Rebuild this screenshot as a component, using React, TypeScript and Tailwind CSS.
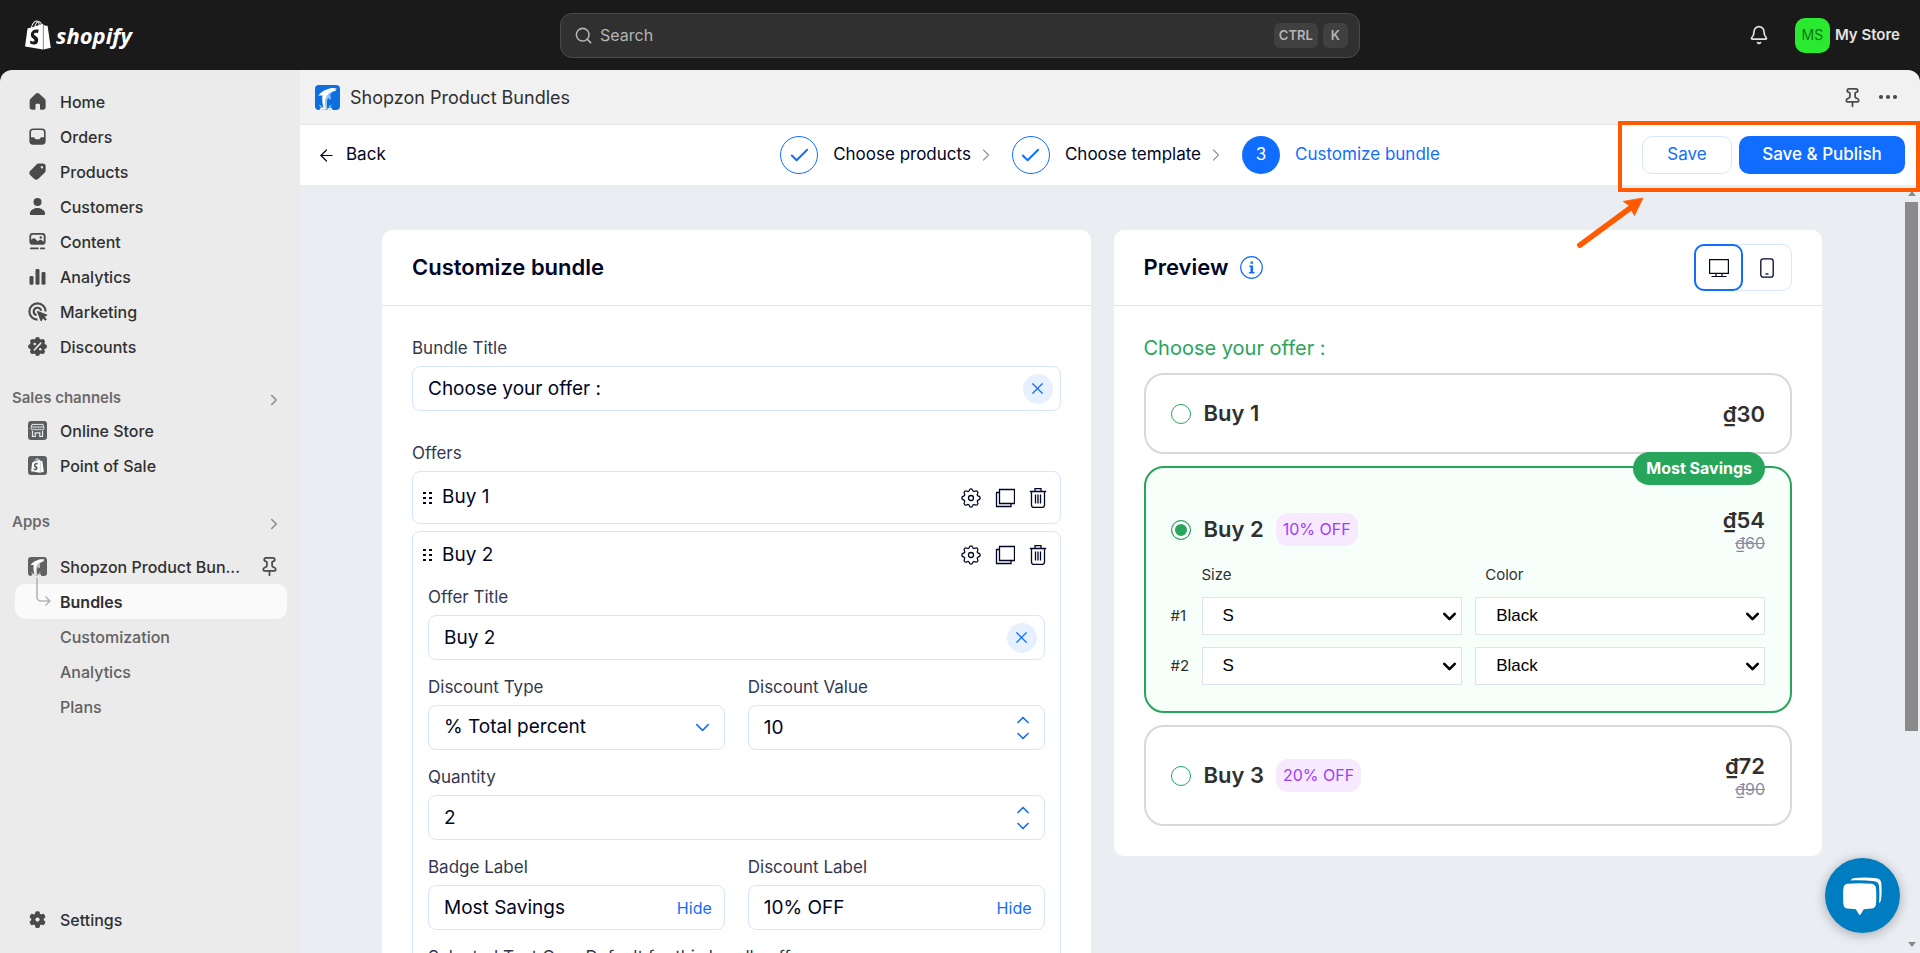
import { useState } from "react";
import type { ReactNode } from "react";
import { ArrowLeft, Bell, Check, ChevronDown, ChevronRight, ChevronUp, Pin, Search, X } from "lucide-react";
import { FaShopify } from "react-icons/fa";

interface NavItem {
  label: string;
  icon: ReactNode;
}

interface Offer {
  id: string;
  title: string;
  price: string;
  oldPrice?: string;
  discount?: string;
  badge?: string;
  variants?: number;
}

const spokes8 = [0, 45, 90, 135, 180, 225, 270, 315];
const spokes6 = [0, 60, 120, 180, 240, 300];

const mainNav: NavItem[] = [
  {
    label: "Home",
    icon: (
      <path d="M8.4 3.9a2.4 2.4 0 0 1 3.2 0l4.2 3.8c.45.4.7 1 .7 1.6v5a2.2 2.2 0 0 1-2.2 2.2h-1.55a.75.75 0 0 1-.75-.75v-3a1 1 0 0 0-1-1h-1.6a1 1 0 0 0-1 1v3a.75.75 0 0 1-.75.75h-1.75a2.2 2.2 0 0 1-2.2-2.2v-5c0-.6.25-1.2.7-1.6z" />
    ),
  },
  {
    label: "Orders",
    icon: (
      <path
        fillRule="evenodd"
        d="M6.5 3.5h7a3 3 0 0 1 3 3v7a3 3 0 0 1-3 3h-7a3 3 0 0 1-3-3v-7a3 3 0 0 1 3-3zM6.6 4.8A1.8 1.8 0 0 0 4.8 6.6v3.9h1.9c.5 0 .9.3 1.1.8a1.2 1.2 0 0 0 1.1.8h2.2a1.2 1.2 0 0 0 1.1-.8c.2-.5.6-.8 1.1-.8h1.9V6.6a1.8 1.8 0 0 0-1.8-1.8z"
      />
    ),
  },
  {
    label: "Products",
    icon: (
      <path
        fillRule="evenodd"
        d="M10.9 3.5h3.4a2.2 2.2 0 0 1 2.2 2.2v3.4c0 .7-.3 1.3-.8 1.8l-5 4.9a2.5 2.5 0 0 1-3.5 0l-2.9-2.9a2.5 2.5 0 0 1 0-3.5l4.9-5c.5-.6 1-.9 1.700-.9zM13.500 5.600a.95.95 0 1 0 0 1.900.95.95 0 0 0 0-1.900z"
      />
    ),
  },
  {
    label: "Customers",
    icon: (
      <>
        <circle cx="10" cy="6.4" r="3.2" />
        <path d="M3.9 15.7c0-2.5 2.9-4.5 6.1-4.5s6.1 2 6.1 4.5c0 .7-.5 1.1-1.2 1.1H5.1c-.7 0-1.2-.4-1.2-1.1z" />
      </>
    ),
  },
  {
    label: "Content",
    icon: (
      <>
        <path
          fillRule="evenodd"
          d="M6.2 3.2h7.6a2.7 2.7 0 0 1 2.7 2.7v4a2.7 2.7 0 0 1-2.7 2.7H6.2a2.7 2.7 0 0 1-2.7-2.7v-4a2.7 2.7 0 0 1 2.7-2.7zM6.3 4.6A1.4 1.4 0 0 0 4.9 6v2.6l1.5-1c.5-.4 1-.4 1.5 0l2.3 2.2 1.4-1c.5-.4 1-.3 1.5 0l1.9 1.4V6a1.4 1.4 0 0 0-1.4-1.4zM12.6 5.7a1 1 0 1 1 0 2 1 1 0 0 1 0-2z"
        />
        <rect x="4" y="14.8" width="7" height="1.4" rx=".7" />
        <rect x="12" y="14.8" width="4" height="1.4" rx=".7" />
      </>
    ),
  },
  {
    label: "Analytics",
    icon: (
      <>
        <rect x="3.6" y="9.6" width="3.2" height="7" rx="1.1" />
        <rect x="8.4" y="4" width="3.2" height="12.6" rx="1.1" />
        <rect x="13.2" y="6.4" width="3.2" height="10.2" rx="1.1" />
      </>
    ),
  },
  {
    label: "Marketing",
    icon: (
      <>
        <path d="M10 16.5A6.5 6.5 0 1 1 16.5 10" fill="none" stroke="currentColor" strokeWidth="1.7" />
        <path d="M9.2 12.9A3 3 0 1 1 12.9 9.4" fill="none" stroke="currentColor" strokeWidth="1.7" />
        <path d="M10.3 9.6l7.2 2.7c.5.2.5.9 0 1.1l-1.8.8 1.8 1.9-1.3 1.3-1.9-1.8-.8 1.8c-.2.5-.9.5-1.1 0L9.6 10.3c-.2-.5.2-.9.7-.7z" />
      </>
    ),
  },
  {
    label: "Discounts",
    icon: (
      <>
        <circle cx="10" cy="10" r="6.2" />
        {spokes8.map((a) => (
          <circle key={a} cx="10" cy="4.3" r="1.9" transform={`rotate(${a} 10 10)`} />
        ))}
        <path d="M7.6 12.6l4.9-5.2" stroke="#ebebeb" strokeWidth="1.4" strokeLinecap="round" />
        <circle cx="7.8" cy="7.9" r="1" fill="#ebebeb" />
        <circle cx="12.2" cy="12.1" r="1" fill="#ebebeb" />
      </>
    ),
  },
];

const offers: Offer[] = [
  { id: "1", title: "Buy 1", price: "₫30" },
  { id: "2", title: "Buy 2", price: "₫54", oldPrice: "₫60", discount: "10% OFF", badge: "Most Savings", variants: 2 },
  { id: "3", title: "Buy 3", price: "₫72", oldPrice: "₫90", discount: "20% OFF" },
];

function NavIcon({ children }: { children: ReactNode }) {
  return (
    <svg viewBox="0 0 20 20" className="size-[25px] shrink-0 fill-current text-[#4a4a4a]" aria-hidden="true">
      {children}
    </svg>
  );
}

function DolphinIcon({ muted = false, className }: { muted?: boolean; className: string }) {
  return (
    <svg viewBox="0 0 25 25" className={className} aria-hidden="true">
      <rect width="25" height="25" rx="4" fill={muted ? "#616161" : "#0b6fe0"} />
      <path
        d="M22 3.6C19 2.600 14.500 2.800 11.800 4.600 8.800 5.400 6.200 7 3.200 10.800c1.500-.3 3-.4 4.300-.3C6.800 14.500 7.300 19.500 9.300 24.500h3.200C11.300 20 11.400 16 12.800 12.500l2.600 2c0-2.200-.1-3.600-.5-5C16.500 7.300 18.500 6 21.500 5.600c-.4-.5-.9-.7-1.500-.8z"
        fill="#fff"
      />
      <path
        d="M20 5.700c-5.400.8-9.600 4.400-10 11.300-.1 2.600.2 5 .9 7.500h1.600C11.300 20 11.400 16 12.800 12.500l2.600 2c0-2.200-.1-3.600-.5-5 1.400-1.900 3-3 5.100-3.800z"
        fill={muted ? "#c4c4c4" : "#8ec3f2"}
      />
      <path
        d="M5 24.600c0-1.300 1-1.800 1.900-1.300.3-1 1.500-1 1.800 0l.4 1.300zM13 24.600c.1-1.300 1-1.700 1.800-1.200.6-.9 2.200-.6 2.200 1.200zM4.800 20.600l1.600 1M16 20.400l-1.800 1.600"
        fill="#fff"
        stroke="#fff"
        strokeWidth=".9"
        strokeLinecap="round"
      />
    </svg>
  );
}

function SectionTitle({ children }: { children: ReactNode }) {
  return (
    <button type="button" className="flex h-[30px] w-full items-center justify-between pr-1 pl-3 text-[15px] font-semibold text-[#6b6b6b]">
      {children}
      <ChevronRight size={18} strokeWidth={2} className="mt-1 text-[#8a8a8a]" />
    </button>
  );
}

function Sidebar() {
  return (
    <nav className="flex w-[300px] shrink-0 flex-col rounded-tl-xl bg-[#ebebeb] pt-[14px] pr-[13px] pb-4 text-base font-medium text-[#303030]">
      <ul>
        {mainNav.map((item) => (
          <li key={item.label}>
            <a href="#" className="flex h-[35px] items-center gap-[10px] pl-[25px]">
              <NavIcon>{item.icon}</NavIcon>
              {item.label}
            </a>
          </li>
        ))}
      </ul>

      <div className="mt-[19px]">
        <SectionTitle>Sales channels</SectionTitle>
        <a href="#" className="flex h-[35px] items-center gap-[13px] pl-7">
          <svg viewBox="0 0 19 19" className="size-[19px] shrink-0" aria-hidden="true">
            <rect width="19" height="19" rx="3" fill="#5c5f62" />
            <path d="M4 3.4h11l1 4.1c0 1.5-2.2 1.7-2.6.3-.4 1.5-2.3 1.5-2.6 0-.4 1.5-2.300 1.5-2.700 0-.4 1.5-2.200 1.5-2.600 0C5 9.300 3 9 3 7.500z" fill="none" stroke="#ebebeb" strokeWidth="1" />
            <path d="M4 6h11M4.500 9.800v5.700h2.700v-3.600h4.600v3.600h2.700V9.800" fill="none" stroke="#ebebeb" strokeWidth="1.2" />
          </svg>
          Online Store
        </a>
        <a href="#" className="flex h-[35px] items-center gap-[13px] pl-7">
          <span className="flex size-[19px] shrink-0 items-center justify-center rounded-[3px] bg-[#5c5f62] text-white">
            <FaShopify size={15} />
          </span>
          Point of Sale
        </a>
      </div>

      <div className="mt-6">
        <SectionTitle>Apps</SectionTitle>
        <div className="relative mt-3 flex h-[35px] items-center">
          <a href="#" className="flex flex-1 items-center gap-[13px] pl-7 whitespace-nowrap">
            <DolphinIcon muted className="size-[19px] shrink-0" />
            Shopzon Product Bun...
          </a>
          <button type="button" aria-label="Unpin" className="mr-[7px] text-[#4a4a4a]">
            <Pin size={21} />
          </button>
          <svg viewBox="0 0 16 30" className="absolute top-7 left-9 z-10 h-[30px] w-4" fill="none" stroke="#b5b5b5" strokeWidth="1.6" strokeLinecap="round" strokeLinejoin="round" aria-hidden="true">
            <path d="M1 1v19a4 4 0 0 0 4 4h8M10 20l4 4-4 4" />
          </svg>
        </div>
        <div className="flex flex-col pl-[15px] text-[#616161]">
          <a href="#" aria-current="page" className="flex h-[35px] items-center rounded-[10px] bg-[#fafafa] pl-[45px] font-semibold text-[#303030]">
            Bundles
          </a>
          {["Customization", "Analytics", "Plans"].map((label) => (
            <a key={label} href="#" className="flex h-[35px] items-center pl-[45px]">
              {label}
            </a>
          ))}
        </div>
      </div>

      <a href="#" className="mt-auto flex h-[35px] items-center gap-[10px] pl-[25px]">
        <NavIcon>
          <circle cx="10" cy="10" r="5" />
          {spokes6.map((a) => (
            <rect key={a} x="8.1" y="3.3" width="3.8" height="4" rx="1.3" transform={`rotate(${a} 10 10)`} />
          ))}
          <circle cx="10" cy="10" r="1.7" fill="#ebebeb" />
        </NavIcon>
        Settings
      </a>
    </nav>
  );
}

function TopBar() {
  return (
    <header className="grid h-[70px] shrink-0 grid-cols-[1fr_800px_1fr] items-center">
      <a href="#" aria-label="Shopify" className="flex items-center gap-[3px] pl-[23px] text-white">
        <FaShopify size={30} />
        <span className="font-['Open_Sans',sans-serif] text-[22px] leading-7 font-bold italic">shopify</span>
      </a>
      <label className="flex h-[45px] items-center gap-[7px] rounded-xl border border-[#4a4a4a] bg-[#303030] pr-[11px] pl-[13px] text-[#b5b5b5]">
        <Search size={19} />
        <input type="search" placeholder="Search" aria-label="Search" className="min-w-0 flex-1 bg-transparent text-base outline-none placeholder:text-[#b5b5b5]" />
        <kbd className="rounded-md bg-[#404040] px-[5px] font-['Inter',sans-serif] text-[13px] leading-[25px] font-semibold">CTRL</kbd>
        <kbd className="-ml-[2px] rounded-md bg-[#404040] px-2 font-['Inter',sans-serif] text-[13px] leading-[25px] font-semibold">K</kbd>
      </label>
      <div className="flex items-center justify-end pr-5">
        <button type="button" aria-label="Notifications" className="mr-[26px] text-[#e3e3e3]">
          <Bell size={20} />
        </button>
        <button type="button" className="flex items-center gap-[5px] text-[15px] font-semibold text-[#e3e3e3]">
          <span className="flex size-[35px] items-center justify-center rounded-[10px] bg-[#29ea2f] text-sm font-normal text-[#136f19]">MS</span>
          My Store
        </button>
      </div>
    </header>
  );
}

function Step({ label, number, current = false }: { label: string; number: number; current?: boolean }) {
  return (
    <li className="flex items-center">
      <span
        className={
          current
            ? "flex size-[38px] items-center justify-center rounded-full bg-[#116dff] text-white"
            : "flex size-[38px] items-center justify-center rounded-full border border-[#116dff] text-[#116dff]"
        }
      >
        {current ? number : <Check size={23} strokeWidth={2} />}
      </span>
      <span className={current ? "ml-[15px] text-[#116dff]" : "ml-[15px]"}>{label}</span>
      {!current && <ChevronRight size={20} strokeWidth={1.5} className="mr-4 ml-[5px] text-[#9a9a9a]" />}
    </li>
  );
}

function ActionBar() {
  return (
    <div className="relative grid h-[60px] shrink-0 grid-cols-[1fr_auto_1fr] items-center bg-white text-[17px] text-[#000624]">
      <button type="button" className="flex items-center gap-[10px] justify-self-start pl-[17px]">
        <ArrowLeft size={19} strokeWidth={1.5} />
        Back
      </button>
      <ol className="flex">
        <Step label="Choose products" number={1} />
        <Step label="Choose template" number={2} />
        <Step label="Customize bundle" number={3} current />
      </ol>
      <div className="flex gap-[7px] justify-self-end pr-[15px]">
        <button type="button" className="h-[38px] w-[90px] rounded-[10px] border border-[#d6e6fe] text-[#116dff]">
          Save
        </button>
        <button type="button" className="h-[38px] w-[166px] rounded-[10px] bg-[#116dff] font-medium text-white">
          Save &amp; Publish
        </button>
      </div>

      {/* callout around the save actions */}
      <div className="pointer-events-none absolute -top-1 right-0 z-20 h-[71px] w-[302px] border-4 border-[#ff5a00]" />
      <svg viewBox="0 0 70 54" className="pointer-events-none absolute top-[71px] right-[275px] z-20 h-[54px] w-[70px]" aria-hidden="true">
        <path d="M4.8 49.2L56 11.500" stroke="#ff5a00" strokeWidth="5.5" strokeLinecap="round" />
        <path d="M68 2L48.300 5.400l6 4.200.300 3.200 2.600 2.600L59.500 19.600z" fill="#ff5a00" stroke="#ff5a00" strokeWidth=".8" />
      </svg>
    </div>
  );
}

const fieldBox = "flex h-[45px] w-full items-center rounded-lg border border-[#d6e6fe] bg-white pl-[15px]";
const fieldInput = "h-full min-w-0 flex-1 bg-transparent text-[19px] text-[#000624] outline-none";

function Field({ id, label, children }: { id: string; label: string; children: ReactNode }) {
  return (
    <div className="min-w-0">
      <label htmlFor={id} className="mb-[6px] block h-6 text-[17px] leading-6 text-[#33384f]">
        {label}
      </label>
      <div className={fieldBox}>{children}</div>
    </div>
  );
}

function ClearableInput({ id, value }: { id: string; value: string }) {
  return (
    <>
      <input id={id} defaultValue={value} className={fieldInput} />
      <button type="button" aria-label="Clear" className="mr-[7px] flex size-[30px] items-center justify-center rounded-full bg-[#e7f0ff] text-[#116dff]">
        <X size={19} strokeWidth={1.5} />
      </button>
    </>
  );
}

function NumberInput({ id, value }: { id: string; value: string }) {
  return (
    <>
      <input id={id} inputMode="numeric" defaultValue={value} className={fieldInput} />
      <span className="mr-[11px] flex flex-col text-[#116dff]">
        <button type="button" aria-label="Increase" className="flex h-4 items-center">
          <ChevronUp size={20} strokeWidth={2} />
        </button>
        <button type="button" aria-label="Decrease" className="flex h-4 items-center">
          <ChevronDown size={20} strokeWidth={2} />
        </button>
      </span>
    </>
  );
}

function HideableInput({ id, value }: { id: string; value: string }) {
  return (
    <>
      <input id={id} defaultValue={value} className={fieldInput} />
      <button type="button" className="mr-3 text-base text-[#116dff]">
        Hide
      </button>
    </>
  );
}

function OfferHeader({ title }: { title: string }) {
  return (
    <div className="flex w-full items-center text-[#000624]">
      <svg viewBox="0 0 9 14" className="h-[14px] w-[9px] fill-current" aria-hidden="true">
        <path d="M0 1h3v2H0zM6 1h3v2H6zM0 6h3v2H0zM6 6h3v2H6zM0 11h3v2H0zM6 11h3v2H6z" />
      </svg>
      <span className="ml-[10px] flex-1 text-[19px]">{title}</span>
      <div className="flex items-center gap-[14px]">
        <button type="button" aria-label={`${title} settings`}>
          <svg viewBox="0 0 20 20" className="size-5" fill="none" stroke="currentColor" strokeWidth="1.3" strokeLinejoin="round" aria-hidden="true">
            <path d="M8.2 2.600C8.500 1.500 9 .8 10 .8s1.500.7 1.800 1.800c.3.900 1.200 1.200 2 .7 1-.6 1.900-.6 2.600.1s.7 1.600.1 2.600c-.5.8-.2 1.700.7 2 1.100.3 2 .9 2 2s-.9 1.700-2 2c-.9.3-1.200 1.200-.7 2 .6 1 .6 1.900-.1 2.600s-1.600.7-2.600.1c-.8-.5-1.700-.2-2 .7-.3 1.100-.8 1.800-1.800 1.800s-1.500-.7-1.800-1.800c-.3-.9-1.200-1.200-2-.7-1 .6-1.900.6-2.600-.1s-.7-1.600-.1-2.600c.5-.8.2-1.700-.7-2-1.100-.3-2-.9-2-2s.9-1.700 2-2c.9-.3 1.200-1.200.7-2-.6-1-.6-1.900.1-2.600s1.600-.7 2.600-.1c.8.5 1.700.2 2-.7z" />
            <circle cx="10" cy="10" r="2.5" />
          </svg>
        </button>
        <button type="button" aria-label={`Duplicate ${title}`}>
          <svg viewBox="0 0 20 20" className="size-5" fill="none" stroke="currentColor" strokeWidth="1.3" aria-hidden="true">
            <path d="M4.5 1.500h15v14h-15zM4.500 4.500h-3v14h14.500v-3" />
          </svg>
        </button>
        <button type="button" aria-label={`Delete ${title}`}>
          <svg viewBox="0 0 18 20" className="h-5 w-[18px]" fill="none" stroke="currentColor" strokeWidth="1.3" aria-hidden="true">
            <path d="M.8 3.500h16.400M6 3.500v-3h6v3M2.500 3.500V17c0 1.400 1.100 2.500 2.500 2.500h8c1.400 0 2.500-1.100 2.500-2.500V3.500M6.500 6.500v9M9 6.500v9M11.500 6.500v9" />
          </svg>
        </button>
      </div>
    </div>
  );
}

function CustomizePanel() {
  return (
    <section className="min-w-0 rounded-[10px] bg-white text-[#000624]">
      <div className="flex h-[76px] items-center border-b border-[#dfe3eb] px-[30px]">
        <h2 className="text-[22px] font-semibold">Customize bundle</h2>
      </div>
      <div className="p-[30px]">
        <Field id="bundle-title" label="Bundle Title">
          <ClearableInput id="bundle-title" value="Choose your offer :" />
        </Field>

        <h3 className="mt-[30px] mb-[6px] h-6 text-[17px] leading-6 text-[#33384f]">Offers</h3>
        <div className="flex h-[53px] items-center rounded-lg border border-[#d6e6fe] pr-[13px] pl-[10px]">
          <OfferHeader title="Buy 1" />
        </div>

        <div className="mt-[7px] rounded-lg border border-[#d6e6fe] pb-[15px]">
          <div className="flex h-[46px] items-center pr-[13px] pl-[10px]">
            <OfferHeader title="Buy 2" />
          </div>
          <div className="mt-[7px] flex flex-col gap-[15px] px-[15px]">
            <Field id="offer-title" label="Offer Title">
              <ClearableInput id="offer-title" value="Buy 2" />
            </Field>
            <div className="grid grid-cols-2 gap-[23px]">
              <Field id="discount-type" label="Discount Type">
                <select id="discount-type" className={`${fieldInput} appearance-none`}>
                  <option>% Total percent</option>
                </select>
                <ChevronDown size={23} strokeWidth={1.5} className="mr-[10px] text-[#116dff]" />
              </Field>
              <Field id="discount-value" label="Discount Value">
                <NumberInput id="discount-value" value="10" />
              </Field>
            </div>
            <Field id="quantity" label="Quantity">
              <NumberInput id="quantity" value="2" />
            </Field>
            <div className="grid grid-cols-2 gap-[23px]">
              <Field id="badge-label" label="Badge Label">
                <HideableInput id="badge-label" value="Most Savings" />
              </Field>
              <Field id="discount-label" label="Discount Label">
                <HideableInput id="discount-label" value="10% OFF" />
              </Field>
            </div>
            <Field id="default-variant" label="Selected Text Over Default for this bundle offer">
              <ClearableInput id="default-variant" value="" />
            </Field>
          </div>
        </div>
      </div>
    </section>
  );
}

function VariantSelect({ label, value }: { label: string; value: string }) {
  return (
    <div className="relative flex items-center">
      <select
        aria-label={label}
        className="h-[38px] w-full appearance-none border border-[#dfe3eb] bg-white pl-5 font-['Liberation_Sans',Arial,sans-serif] text-[17px] text-black"
      >
        <option>{value}</option>
      </select>
      <ChevronDown size={21} strokeWidth={3} className="pointer-events-none absolute right-[2px] text-black" />
    </div>
  );
}

function OfferCard({ offer, selected, onSelect }: { offer: Offer; selected: boolean; onSelect: () => void }) {
  return (
    <div
      className={
        selected
          ? "relative rounded-[20px] border-2 border-[#27a55a] bg-[#f6fffa] px-[25px] text-[#303030]"
          : "relative rounded-[20px] border-2 border-[#d9d9d9] bg-white px-[25px] text-[#303030]"
      }
    >
      {offer.badge && (
        <span className="absolute -top-4 right-[25px] rounded-full bg-[#27a55a] px-[13px] text-base leading-[33px] font-bold text-white">{offer.badge}</span>
      )}
      <label
        className={
          offer.badge ? "flex h-[95px] items-center pt-[28px]" : offer.oldPrice ? "flex h-[97px] items-center" : "flex h-[77px] items-center"
        }
      >
        <input
          type="radio"
          name="offer"
          checked={selected}
          onChange={onSelect}
          className="size-5 appearance-none rounded-full border border-[#27a55a] bg-white checked:bg-[#27a55a] checked:shadow-[inset_0_0_0_3px_#fff]"
        />
        <span className="ml-[13px] text-[22px] font-semibold">{offer.title}</span>
        {offer.discount && (
          <span className="ml-3 rounded-xl bg-[#f7eaff] px-[7px] text-base leading-[33px] text-[#a23bff]">{offer.discount}</span>
        )}
        <span className="ml-auto flex flex-col items-end">
          <span className="text-[22px] leading-[26px] font-semibold">{offer.price}</span>
          {offer.oldPrice && <s className="text-base leading-5 text-[#868aa5]">{offer.oldPrice}</s>}
        </span>
      </label>
      {offer.variants && (
        <div className="grid grid-cols-[18px_261fr_290fr] items-center gap-x-[13px] gap-y-3 pb-[26px] text-[15px]">
          <span className="col-start-2 h-[22px] leading-6">Size</span>
          <span className="h-[22px] pl-[10px] leading-6">Color</span>
          {Array.from({ length: offer.variants }, (_, i) => (
            <div key={i} className="contents">
              <span>#{i + 1}</span>
              <VariantSelect label={`Size ${i + 1}`} value="S" />
              <VariantSelect label={`Color ${i + 1}`} value="Black" />
            </div>
          ))}
        </div>
      )}
    </div>
  );
}

function PreviewPanel() {
  const [selected, setSelected] = useState("2");

  return (
    <section className="min-w-0 self-start rounded-[10px] bg-white">
      <div className="flex h-[76px] items-center border-b border-[#dfe3eb] px-[30px] text-[#000624]">
        <h2 className="text-[22px] font-semibold">Preview</h2>
        <button type="button" aria-label="About the preview" className="ml-3 text-[#116dff]">
          <svg viewBox="0 0 23 23" className="size-[23px]" aria-hidden="true">
            <circle cx="11.5" cy="11.5" r="10.8" fill="none" stroke="currentColor" strokeWidth="1.2" />
            <path d="M10.500 5.500h2.500v2.200h-2.500zM9.300 9.400h3.800v6.700h1.400v1.500H8.900v-1.500h1.600v-5.200H9.300z" fill="currentColor" />
          </svg>
        </button>
        <div className="ml-auto flex h-[47px] rounded-[10px] border border-[#d6e6fe]">
          <button type="button" aria-label="Desktop preview" aria-pressed="true" className="-m-px flex w-[49px] items-center justify-center rounded-[10px] border-2 border-[#116dff]">
            <svg viewBox="0 0 20 20" className="size-5" fill="none" stroke="currentColor" strokeWidth="1.2" aria-hidden="true">
              <path d="M.6 1.600h18.800v13.800H.6zM7 15.400v3M13 15.400v3M2.500 18.500h15" />
            </svg>
          </button>
          <button type="button" aria-label="Mobile preview" className="flex w-[49px] items-center justify-center">
            <svg viewBox="0 0 14 20" className="h-5 w-[14px]" fill="none" stroke="currentColor" strokeWidth="1.3" aria-hidden="true">
              <rect x=".8" y=".8" width="12.4" height="18.4" rx="2.5" />
              <path d="M5.5 16h3" />
            </svg>
          </button>
        </div>
      </div>
      <div className="p-[30px]">
        <p className="mb-[13px] h-6 text-[20px] leading-6 text-[#27a55a]">Choose your offer :</p>
        <div className="flex flex-col gap-3">
          {offers.map((offer) => (
            <OfferCard key={offer.id} offer={offer} selected={offer.id === selected} onSelect={() => setSelected(offer.id)} />
          ))}
        </div>
      </div>
    </section>
  );
}

function ScrollTrack() {
  return (
    <div className="flex w-4 shrink-0 flex-col items-center py-[6px] pr-[2px] pl-px" aria-hidden="true">
      <svg viewBox="0 0 8 5" className="h-[5px] w-2 fill-[#8a8a8a]">
        <path d="M0 5l4-5 4 5z" />
      </svg>
      <div className="mt-[6px] mb-auto h-[70%] w-[13px] bg-[#8a8a8a]" />
      <svg viewBox="0 0 8 5" className="h-[5px] w-2 fill-[#8a8a8a]">
        <path d="M0 0l4 5 4-5z" />
      </svg>
    </div>
  );
}

export default function App() {
  return (
    <div className="flex h-screen flex-col overflow-hidden bg-[#1a1a1a] font-['Inter',sans-serif]">
      <TopBar />
      <div className="flex min-h-0 flex-1">
        <Sidebar />
        <main className="flex min-w-0 flex-1 flex-col">
          <div className="flex h-[55px] shrink-0 items-center rounded-tr-xl border-b border-[#e3e3e3] bg-[#f1f1f1] pr-[22px] pl-[15px] text-[#303030]">
            <DolphinIcon className="size-[25px]" />
            <h1 className="ml-[10px] flex-1 text-[18px]">Shopzon Product Bundles</h1>
            <button type="button" aria-label="Pin app" className="text-[#4a4a4a]">
              <Pin size={21} />
            </button>
            <button type="button" aria-label="More actions" className="ml-[15px] text-[#4a4a4a]">
              <svg viewBox="0 0 20 6" className="h-[6px] w-5 fill-current" aria-hidden="true">
                <circle cx="3" cy="3" r="2.1" />
                <circle cx="10" cy="3" r="2.1" />
                <circle cx="17" cy="3" r="2.1" />
              </svg>
            </button>
          </div>
          <ActionBar />
          <div className="flex min-h-0 flex-1 bg-[#eaeef3]">
            <div className="min-w-0 flex-1 overflow-y-auto px-4 py-[45px] [scrollbar-width:none]">
              <div className="mx-auto grid max-w-[1440px] grid-cols-2 gap-[23px]">
                <CustomizePanel />
                <PreviewPanel />
              </div>
            </div>
            <ScrollTrack />
          </div>
        </main>
      </div>

      <button type="button" aria-label="Open chat" className="fixed right-5 bottom-5 z-30 flex size-[75px] items-center justify-center rounded-full bg-[#007dc1] shadow-[0_2px_12px_rgba(0,0,0,0.3)]">
        <svg viewBox="0 0 39 38" className="h-[38px] w-[39px] fill-white" aria-hidden="true">
          <path d="M4.5 6.800c8-.9 16-.9 24 0 2.700.3 4.300 2 4.500 4.700.4 5 .4 10.500 0 15.500-.2 2.700-1.800 4.300-4.500 4.600l-7.700.6-3.300 5.300c-.4.6-1 .6-1.400 0l-3.300-5.300-8.300-.6C2 31.300.6 29.700.4 27c-.4-5-.4-10.500 0-15.500.2-2.700 1.400-4.400 4.100-4.700z" />
          <path d="M7.500 3.600C8.300 2 9.800 1.200 11.500 1c7.300-.8 14.800-.7 22 .2 2.800.3 4.600 2 4.800 4.800.5 5.500.5 11-.2 16.500-.2 1.600-.9 2.800-2.100 3.500.5-5.500.6-11.500 0-17-.3-3-1.800-4.500-4.700-4.800-7.900-.9-15.900-1.200-23.800-.6z" />
        </svg>
      </button>
    </div>
  );
}
